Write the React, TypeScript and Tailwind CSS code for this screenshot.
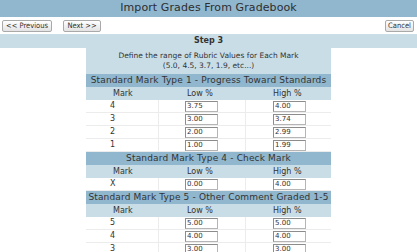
import React from "react";

type Group = {
  title: string;
  rows: { mark: string; low: string; high: string }[];
};

const groups: Group[] = [
  {
    title: "Standard Mark Type 1 - Progress Toward Standards",
    rows: [
      { mark: "4", low: "3.75", high: "4.00" },
      { mark: "3", low: "3.00", high: "3.74" },
      { mark: "2", low: "2.00", high: "2.99" },
      { mark: "1", low: "1.00", high: "1.99" },
    ],
  },
  {
    title: "Standard Mark Type 4 - Check Mark",
    rows: [{ mark: "X", low: "0.00", high: "4.00" }],
  },
  {
    title: "Standard Mark Type 5 - Other Comment Graded 1-5",
    rows: [
      { mark: "5", low: "5.00", high: "5.00" },
      { mark: "4", low: "4.00", high: "4.00" },
      { mark: "3", low: "3.00", high: "3.00" },
    ],
  },
];

const Btn = ({ children, w }: { children: React.ReactNode; w: string }) => (
  <button
    className={`${w} h-[12px] flex items-center justify-center border border-[#a9a9a9] rounded-[2px] bg-gradient-to-b from-white to-[#e3e3e3] text-[7.5px] leading-none text-[#333] font-['DejaVu_Sans_Condensed','DejaVu_Sans',sans-serif]`}
  >
    {children}
  </button>
);

const ValueBox = ({ value }: { value: string }) => (
  <div className="w-[33px] h-[11px] border border-[#b5b5b5] border-t-[#8c8c8c] border-l-[#8c8c8c] bg-white text-[7px] leading-[9px] pl-[1px] text-[#333]">
    {value}
  </div>
);

export default function App() {
  return (
    <div className="w-[417px] h-[252px] overflow-hidden bg-white text-[#333] font-['DejaVu_Sans',sans-serif]">
      {/* Title */}
      <div className="h-[17px] bg-[#90b7ce] flex items-center justify-center text-[11px] tracking-[0.1px] text-[#2e2e2e]">
        Import Grades From Gradebook
      </div>

      {/* Nav buttons */}
      <div className="h-[17px] flex items-center pl-[2px] pr-[3px] pt-[1px]">
        <Btn w="w-[50px]">&lt;&lt; Previous</Btn>
        <div className="w-[11px]" />
        <Btn w="w-[38px]">Next &gt;&gt;</Btn>
        <div className="flex-1" />
        <Btn w="w-[29px]">Cancel</Btn>
      </div>

      {/* Step */}
      <div className="h-[14px] bg-[#c9dde7] flex items-center justify-center text-[8px] font-bold">
        Step 3
      </div>

      {/* Table */}
      <div className="ml-[86px] w-[245px]">
        <div className="h-[26px] bg-[#c9dde7] flex flex-col items-center justify-center text-[7.5px] leading-[10px]">
          <span>Define the range of Rubric Values for Each Mark</span>
          <span>(5.0, 4.5, 3.7, 1.9, etc...)</span>
        </div>

        {groups.map((g) => (
          <div key={g.title}>
            <div className="h-[13px] bg-[#90b7ce] flex items-center justify-center text-[9px] tracking-[0.15px] whitespace-nowrap">
              {g.title}
            </div>
            <div className="h-[13px] bg-[#c9dde7] grid grid-cols-[72px_87px_86px] items-center text-[8px]">
              <span className="pl-[27px]">Mark</span>
              <span className="pl-[29px]">Low %</span>
              <span className="pl-[28px]">High %</span>
            </div>
            {g.rows.map((r) => (
              <div
                key={r.mark}
                className="h-[13px] grid grid-cols-[72px_87px_86px] border-b border-[#ececec] text-[8px]"
              >
                <div className="pl-[24px] flex items-center">{r.mark}</div>
                <div className="pl-[26px] flex items-center border-l border-[#ececec]">
                  <ValueBox value={r.low} />
                </div>
                <div className="pl-[27px] flex items-center border-l border-[#ececec]">
                  <ValueBox value={r.high} />
                </div>
              </div>
            ))}
          </div>
        ))}
      </div>
    </div>
  );
}
